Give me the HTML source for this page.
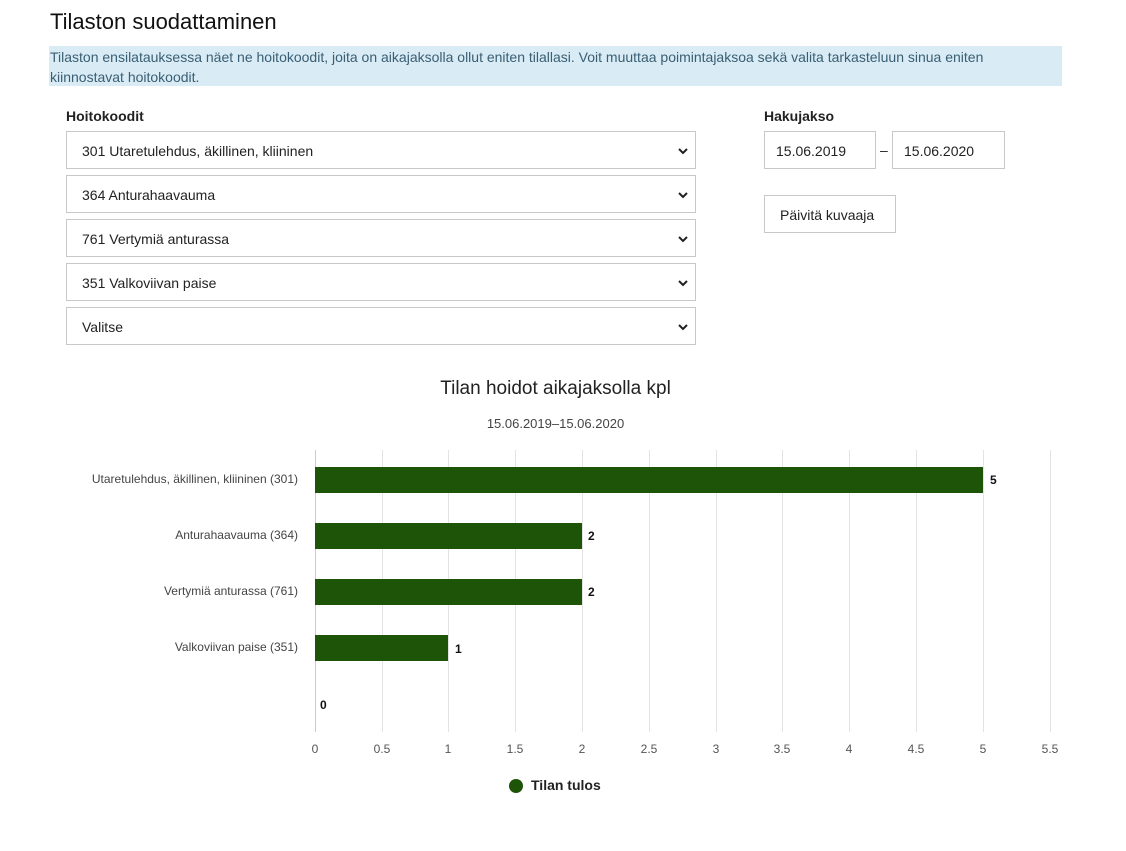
<!DOCTYPE html>
<html><head><meta charset="utf-8"><style>
*{margin:0;padding:0;box-sizing:border-box}
body{width:1126px;height:851px;background:#fff;font-family:"Liberation Sans",sans-serif;color:#222;position:relative;overflow:hidden}
.a{position:absolute;white-space:nowrap}
.sel{position:absolute;left:66px;width:630px;height:38px;border:1px solid #c8c8c8;font-size:14px;padding:11px 15px;color:#222}
.sel svg{position:absolute;right:6px;top:14px}
.inp{position:absolute;top:131px;height:38px;border:1px solid #c8c8c8;font-size:14px;padding:11px 11px}
.grid{position:absolute;top:450px;width:1px;height:282px;background:#e3e3e3}
.bar{position:absolute;left:315px;height:26px;background:#1d5407}
.lbl{position:absolute;font-size:12px;color:#444;text-align:right;right:828px}
.val{position:absolute;font-size:12px;font-weight:bold;color:#111}
.tick{position:absolute;top:742px;font-size:12px;color:#555;width:30px;text-align:center}
</style></head><body>
<div class="a" style="left:50px;top:9px;font-size:22px;color:#111">Tilaston suodattaminen</div>
<div class="a" style="left:49px;top:46px;width:1013px;height:40px;background:#d9ecf5;font-size:14px;color:#3a5e73;padding:1px 1px;line-height:20px;white-space:normal">Tilaston ensilatauksessa näet ne hoitokoodit, joita on aikajaksolla ollut eniten tilallasi. Voit muuttaa poimintajaksoa sekä valita tarkasteluun sinua eniten kiinnostavat hoitokoodit.</div>
<div class="a" style="left:66px;top:108px;font-size:14px;font-weight:bold">Hoitokoodit</div>
<div class="a" style="left:764px;top:108px;font-size:14px;font-weight:bold">Hakujakso</div>
<div class="sel" style="top:131px">301 Utaretulehdus, äkillinen, kliininen<svg width="12" height="10"><path d="M2 3l4 4 4-4" stroke="#222" stroke-width="2" fill="none"/></svg></div>
<div class="sel" style="top:175px">364 Anturahaavauma<svg width="12" height="10"><path d="M2 3l4 4 4-4" stroke="#222" stroke-width="2" fill="none"/></svg></div>
<div class="sel" style="top:219px">761 Vertymiä anturassa<svg width="12" height="10"><path d="M2 3l4 4 4-4" stroke="#222" stroke-width="2" fill="none"/></svg></div>
<div class="sel" style="top:263px">351 Valkoviivan paise<svg width="12" height="10"><path d="M2 3l4 4 4-4" stroke="#222" stroke-width="2" fill="none"/></svg></div>
<div class="sel" style="top:307px">Valitse<svg width="12" height="10"><path d="M2 3l4 4 4-4" stroke="#222" stroke-width="2" fill="none"/></svg></div>
<div class="inp" style="left:764px;width:112px">15.06.2019</div>
<div class="a" style="left:880px;top:142px;font-size:14px">–</div>
<div class="inp" style="left:892px;width:113px">15.06.2020</div>
<div class="a" style="left:764px;top:195px;width:132px;height:38px;border:1px solid #c8c8c8;font-size:14px;padding:11px 15px">Päivitä kuvaaja</div>
<div class="a" style="left:0;width:1111px;text-align:center;top:378px;font-size:19px;color:#222">Tilan hoidot aikajaksolla kpl</div>
<div class="a" style="left:0;width:1111px;text-align:center;top:416px;font-size:13px;color:#444">15.06.2019–15.06.2020</div>
<div class="grid" style="left:315px;background:#ccc"></div>
<div class="grid" style="left:382px"></div><div class="grid" style="left:448px"></div><div class="grid" style="left:515px"></div><div class="grid" style="left:582px"></div><div class="grid" style="left:649px"></div><div class="grid" style="left:716px"></div><div class="grid" style="left:782px"></div><div class="grid" style="left:849px"></div><div class="grid" style="left:916px"></div><div class="grid" style="left:983px"></div><div class="grid" style="left:1050px"></div>
<div class="bar" style="top:467px;width:668px"></div>
<div class="bar" style="top:523px;width:267px"></div>
<div class="bar" style="top:579px;width:267px"></div>
<div class="bar" style="top:635px;width:133px"></div>
<div class="lbl" style="top:472px">Utaretulehdus, äkillinen, kliininen (301)</div>
<div class="lbl" style="top:528px">Anturahaavauma (364)</div>
<div class="lbl" style="top:584px">Vertymiä anturassa (761)</div>
<div class="lbl" style="top:640px">Valkoviivan paise (351)</div>
<div class="val" style="left:990px;top:473px">5</div>
<div class="val" style="left:588px;top:529px">2</div>
<div class="val" style="left:588px;top:585px">2</div>
<div class="val" style="left:455px;top:642px">1</div>
<div class="val" style="left:320px;top:698px">0</div>
<div class="tick" style="left:300px">0</div><div class="tick" style="left:367px">0.5</div><div class="tick" style="left:433px">1</div><div class="tick" style="left:500px">1.5</div><div class="tick" style="left:567px">2</div><div class="tick" style="left:634px">2.5</div><div class="tick" style="left:701px">3</div><div class="tick" style="left:767px">3.5</div><div class="tick" style="left:834px">4</div><div class="tick" style="left:901px">4.5</div><div class="tick" style="left:968px">5</div><div class="tick" style="left:1035px">5.5</div>
<div class="a" style="left:509px;top:779px;width:14px;height:14px;border-radius:50%;background:#1d5407"></div>
<div class="a" style="left:531px;top:777px;font-size:14px;font-weight:bold;color:#222">Tilan tulos</div>
</body></html>
